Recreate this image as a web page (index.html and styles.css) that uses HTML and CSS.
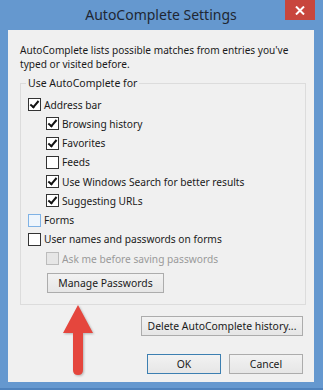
FILE: index.html
```html
<!DOCTYPE html>
<html lang="en">
<head>
    <meta charset="UTF-8">
    <title>AutoComplete Settings</title>
    <link rel="stylesheet" href="styles.css">
</head>
<body>

<div class="window">
    <div class="titlebar">
        <span></span>
        <span class="title">AutoComplete Settings</span>
        <span class="close">
            <svg width="10" height="9" viewBox="0 0 10 9"><path d="M1 0.5 L9 8.5 M9 0.5 L1 8.5" stroke="#fff" stroke-width="2"/></svg>
        </span>
    </div>

    <div class="client">
        <p class="intro">AutoComplete lists possible matches from entries you've<br>typed or visited before.</p>

        <fieldset class="group">
            <legend>Use AutoComplete for</legend>

            <label class="row"><span class="box checked"></span>Address bar</label>
            <label class="row sub"><span class="box checked"></span>Browsing history</label>
            <label class="row sub"><span class="box checked"></span>Favorites</label>
            <label class="row sub"><span class="box"></span>Feeds</label>
            <label class="row sub"><span class="box checked"></span>Use Windows Search for better results</label>
            <label class="row sub"><span class="box checked"></span>Suggesting URLs</label>
            <label class="row"><span class="box hover"></span>Forms</label>
            <label class="row"><span class="box"></span>User names and passwords on forms</label>
            <label class="row sub disabled"><span class="box"></span>Ask me before saving passwords</label>

            <button class="btn manage">Manage Passwords</button>
        </fieldset>

        <div class="actions">
            <button class="btn delete">Delete AutoComplete history...</button>
        </div>

        <div class="actions bottom">
            <button class="btn ok">OK</button>
            <button class="btn">Cancel</button>
        </div>

        <!-- annotation arrow -->
        <svg class="arrow" width="34" height="72" viewBox="0 0 34 72">
            <path d="M17 1 L32 29 L22 29 L22 66 Q22 71 17 71 Q12 71 12 66 L12 29 L2 29 Z" fill="#e5463d"/>
        </svg>
    </div>
</div>

</body>
</html>
```

FILE: styles.css
```css
body {
    margin: 0;
    font-family: 'Noto Sans', 'Open Sans', sans-serif;
    font-size: 10.2px;
    color: #1a1a1a;
}

.window {
    width: 323px;
    height: 390px;
    box-sizing: border-box;
    background-color: #6598cf;
    border-bottom: 2px solid #4f82bc;
    padding: 0 9px 0 8px;
}

.titlebar {
    height: 30px;
    display: grid;
    grid-template-columns: 1fr auto 1fr;
    align-items: start;
}

.title {
    font-size: 14px;
    color: #1f2733;
    line-height: 29px;
}

.close {
    justify-self: end;
    width: 30px;
    height: 20px;
    margin-right: -1px;
    background-color: #c8463d;
    display: flex;
    align-items: center;
    justify-content: center;
}

.client {
    position: relative;
    height: 352px;
    box-sizing: border-box;
    background-color: #f0f0f0;
    padding: 13px 8px 0 12px;
    display: flex;
    flex-direction: column;
}

.intro {
    margin: 0;
    line-height: 14px;
    font-size: 10.1px;
}

.group {
    margin: 5px 0 0 0;
    padding: 5px 7px 11px 7px;
    border: 1px solid #dcdcdc;
    display: flex;
    flex-direction: column;
}

.group legend {
    padding: 0 2px;
    margin-left: -2px;
    line-height: 14px;
    font-size: 10.5px;
}

.row {
    height: 19.25px;
    display: flex;
    align-items: center;
    gap: 3px;
    white-space: nowrap;
}

.row.sub {
    padding-left: 18px;
}

.row.disabled {
    color: #9a9a9a;
}

.box {
    width: 11px;
    height: 11px;
    border: 1px solid #333;
    background-color: #fff;
    display: inline-block;
    position: relative;
    flex: none;
}

.box.checked::after {
    content: '';
    position: absolute;
    left: 3px;
    top: 0;
    width: 3px;
    height: 7px;
    border: solid #111;
    border-width: 0 2.5px 2.5px 0;
    transform: rotate(40deg);
}

.box.hover {
    border-color: #7fb2e5;
    background-color: #eef5fc;
}

.row.disabled .box {
    border-color: #bcbcbc;
    background-color: #e6e6e6;
}

.btn {
    font-family: inherit;
    font-size: 10.4px;
    color: #1a1a1a;
    height: 20px;
    padding: 0;
    border: 1px solid #acacac;
    background: linear-gradient(#f2f2f2, #e6e6e6);
    line-height: 18px;
    white-space: nowrap;
}

.manage {
    align-self: flex-start;
    width: 117px;
    margin: 5px 0 0 19px;
}

.actions {
    display: flex;
    justify-content: flex-end;
    gap: 8px;
    margin: 11px 3px 0 0;
}

.delete {
    width: 162px;
}

.actions.bottom {
    margin-top: 18px;
}

.actions.bottom .btn {
    width: 74px;
}

.btn.ok {
    border-color: #3c7fb1;
}

.arrow {
    position: absolute;
    left: 53px;
    top: 274px;
    filter: drop-shadow(1px 1px 1px rgba(0, 0, 0, 0.25));
}
```
